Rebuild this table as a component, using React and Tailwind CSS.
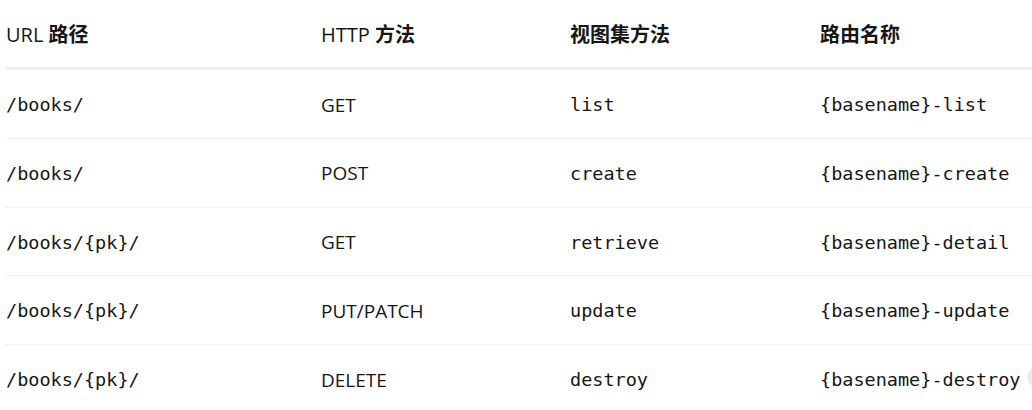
import React from "react";

const rows = [
  ["/books/", "GET", "list", "{basename}-list"],
  ["/books/", "POST", "create", "{basename}-create"],
  ["/books/{pk}/", "GET", "retrieve", "{basename}-detail"],
  ["/books/{pk}/", "PUT/PATCH", "update", "{basename}-update"],
  ["/books/{pk}/", "DELETE", "destroy", "{basename}-destroy"],
];

const sans = "font-['Open_Sans','Noto_Sans_CJK_SC',sans-serif]";
const mono = "font-['DejaVu_Sans_Mono','Noto_Sans_CJK_SC',monospace]";

function H({ latin, cjk }) {
  return (
    <div className="pl-px">
      {latin && <span className="font-medium">{latin} </span>}
      <span className="font-bold font-['Noto_Sans_CJK_SC',sans-serif]">{cjk}</span>
    </div>
  );
}

export default function App() {
  return (
    <div className={`relative w-[1032px] h-[410px] overflow-hidden bg-white text-[#161616] ${sans}`}>
      <div className="pl-[5px] w-[1100px]">
        <div className="grid grid-cols-[315px_249px_250px_1fr] items-center h-[70px] border-b-[3px] border-[#efefef] text-[20px] pt-px">
          <H latin="URL" cjk="路径" />
          <H latin="HTTP" cjk="方法" />
          <H cjk="视图集方法" />
          <H cjk="路由名称" />
        </div>
        {rows.map((r, i) => (
          <div
            key={i}
            className="grid grid-cols-[315px_249px_250px_1fr] items-center h-[68.75px] border-b border-[#f0f0f0] pt-[2px]"
          >
            <div className={`pl-px text-[18.5px] ${mono}`}>{r[0]}</div>
            <div className="pl-px text-[19px]">{r[1]}</div>
            <div className={`pl-px text-[18.5px] ${mono}`}>{r[2]}</div>
            <div className={`pl-px text-[18.5px] ${mono}`}>{r[3]}</div>
          </div>
        ))}
      </div>
      <div className="absolute left-[1027px] top-[367px] w-[20px] h-[20px] rounded-full bg-[#ececec]" />
    </div>
  );
}
